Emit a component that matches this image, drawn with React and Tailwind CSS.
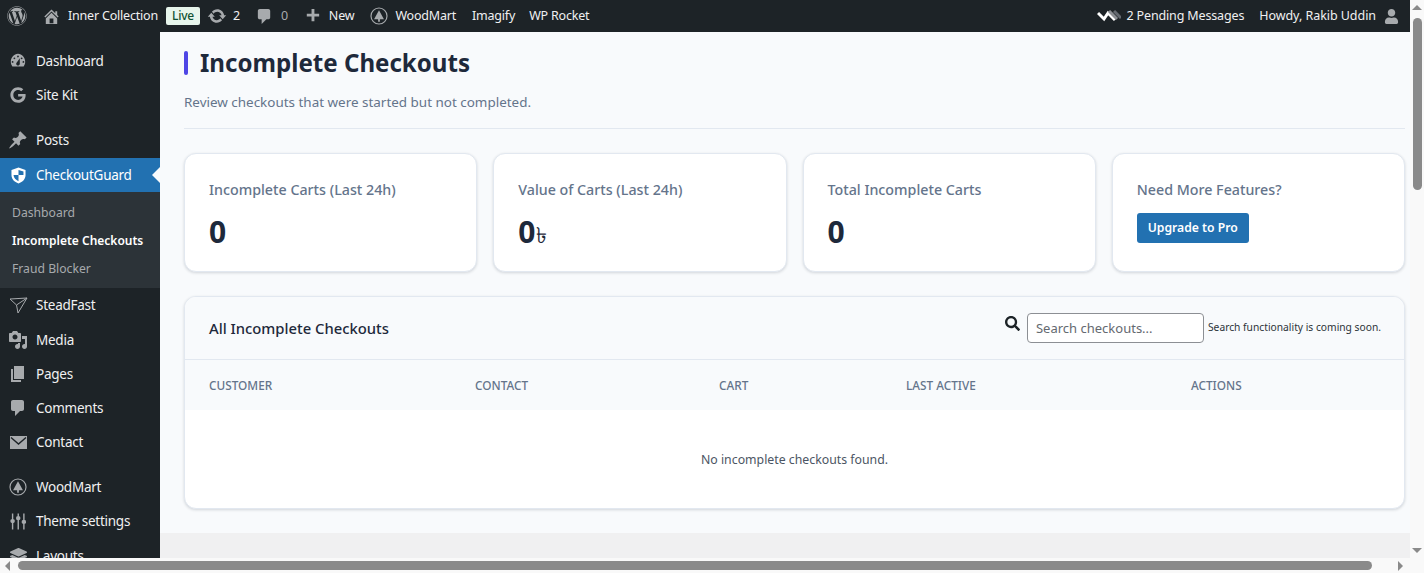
import { FaWordpress, FaGoogle, FaSearch, FaUser, FaLayerGroup } from "react-icons/fa";

const Dash = ({ d, size = 18, color = "#a7aaad" }) => (
  <svg width={size} height={size} viewBox="0 0 20 20" fill={color} fillRule="evenodd">
    <path d={d} />
  </svg>
);

const paths = {
  home: "M16 8.5l1.53 1.53-1.06 1.06L10 4.62l-6.47 6.47-1.06-1.06L10 2.5l4 4v-2h2v4zm-6-2.46l6 5.99V18H4v-5.97zM12 17v-5H8v5h4z",
  update: "M10.2 3.28c3.53 0 6.43 2.61 6.92 6h2.08l-3.5 4-3.5-4h2.32c-.45-1.97-2.21-3.44-4.32-3.44-1.45 0-2.73.71-3.54 1.8L4.95 5.66C6.23 4.2 8.11 3.28 10.2 3.28zm-.4 13.44c-3.52 0-6.43-2.61-6.92-6H.8l3.5-4c1.17 1.33 2.33 2.67 3.5 4H5.48c.45 1.97 2.21 3.44 4.32 3.44 1.45 0 2.73-.71 3.54-1.8l1.71 1.98c-1.28 1.46-3.16 2.38-5.25 2.38z",
  comment: "M5 2h9c1.1 0 2 .9 2 2v7c0 1.1-.9 2-2 2h-2l-5 5v-5H5c-1.1 0-2-.9-2-2V4c0-1.1.9-2 2-2z",
  plus: "M17 7v3h-5v5H9v-5H4V7h5V2h3v5h5z",
  page: "M6 15V2h10v13H6zm-1 1h8v2H3V5h2v11z",
  media: "M13 11V4c0-.55-.45-1-1-1h-1.67L9 1H5L3.67 3H2c-.55 0-1 .45-1 1v7c0 .55.45 1 1 1h10c.55 0 1-.45 1-1zM7 4.5c1.38 0 2.5 1.12 2.5 2.5S8.38 9.5 7 9.5 4.5 8.38 4.5 7 5.62 4.500 7 4.5zM14 6h5v10.5c0 1.38-1.12 2.5-2.5 2.5S14 17.88 14 16.5s1.12-2.5 2.5-2.5c.17 0 .34.02.5.05V9h-3V6zm-4 8.05V13h2v3.5c0 1.38-1.12 2.5-2.5 2.5S7 17.88 7 16.5 8.12 14 9.500 14c.17 0 .34.02.5.05z",
  pin: "M10.44 3.02l1.82-1.82 6.36 6.35-1.83 1.82c-1.05-.68-2.48-.57-3.41.36l-.75.75c-.92.93-1.04 2.35-.35 3.41l-1.83 1.82-2.41-2.41-2.8 2.79c-.42.42-3.38 2.71-3.8 2.29s1.86-3.39 2.28-3.81l2.79-2.79L4.1 9.36l1.83-1.82c1.05.69 2.48.57 3.4-.36l.75-.75c.93-.92 1.05-2.35.36-3.41z",
  gauge: "M3.76 16h12.48c1.1-1.43 1.76-3.21 1.76-5.14 0-4.47-3.58-8.86-8-8.86s-8 4.39-8 8.86c0 1.93.66 3.71 1.76 5.14zM10 4c.55 0 1 .45 1 1s-.45 1-1 1-1-.45-1-1 .45-1 1-1zM6 6c.55 0 1 .45 1 1s-.45 1-1 1-1-.45-1-1 .45-1 1-1zm8 0c.55 0 1 .45 1 1s-.45 1-1 1-1-.45-1-1 .45-1 1-1zm-5.37 5.55L12 7v6c0 1.1-.9 2-2 2s-2-.9-2-2c0-.57.24-1.08.63-1.45zM4 10c.55 0 1 .45 1 1s-.45 1-1 1-1-.45-1-1 .45-1 1-1zm12 0c.55 0 1 .45 1 1s-.45 1-1 1-1-.45-1-1 .45-1 1-1z",
};

const TreeIcon = ({ size = 18 }) => (
  <svg width={size} height={size} viewBox="0 0 20 20" fill="none">
    <circle cx="10" cy="10" r="8.9" stroke="#a7aaad" strokeWidth="1.3" />
    <path d="M10 3.500 15.500 13.500H11V16.500H9V13.500H4.500Z" fill="#a7aaad" />
  </svg>
);

const ShieldIcon = () => (
  <svg width="15" height="17" viewBox="0 0 16 18">
    <path d="M8 .5 15.500 3v5.500c0 4.200-3 7.600-7.500 9C3.500 16.100.5 12.700.5 8.500V3Z" fill="#fff" />
    <path d="M8 3 13.300 4.800V8.500H8ZM8 8.500V15C5 13.800 2.900 11.500 2.700 8.500Z" fill="#2271b1" />
  </svg>
);

const PlaneIcon = () => (
  <svg width="19" height="17" viewBox="0 0 19 17" fill="none" stroke="#a7aaad" strokeWidth="1">
    <path d="M1 2 18 1 9 16 7.500 8ZM18 1 7.500 8" />
  </svg>
);

const MailIcon = () => (
  <svg width="17" height="13" viewBox="0 0 17 13">
    <rect width="17" height="13" fill="#a7aaad" />
    <path d="M1 1.500 8.500 8 16 1.500" fill="none" stroke="#1d2327" strokeWidth="1.400" />
  </svg>
);

const SlidersIcon = () => (
  <svg width="16" height="17" viewBox="0 0 17 17" fill="#a7aaad">
    <rect x="2" y="0" width="1.500" height="17" />
    <rect x="8" y="0" width="1.500" height="17" />
    <rect x="14" y="0" width="1.500" height="17" />
    <rect x="0.500" y="6" width="4.500" height="4" rx="1.500" />
    <rect x="6.500" y="3" width="4.500" height="4" rx="1.500" />
    <rect x="12.500" y="7" width="4.500" height="4" rx="1.500" />
  </svg>
);

const PendingIcon = () => (
  <svg width="24" height="12" viewBox="0 0 24 12" fill="none" strokeWidth="3">
    <path d="M1 3 7 9 11 3 18 10" stroke="#fff" />
    <path d="M12 1 20 9" stroke="#8c8f94" />
    <path d="M17 1 24 8" stroke="#646970" />
  </svg>
);

const menuTop = [
  { label: "Dashboard", icon: <Dash d={paths.gauge} /> },
  { label: "Site Kit", icon: <FaGoogle size={16} color="#a7aaad" /> },
];

const menuBottom = [
  { label: "Media", icon: <Dash d={paths.media} size={20} /> },
  { label: "Pages", icon: <Dash d={paths.page} size={20} /> },
  { label: "Comments", icon: <Dash d={paths.comment} size={20} /> },
  { label: "Contact", icon: <MailIcon /> },
];

const stats = [
  { label: "Incomplete Carts (Last 24h)", value: "0" },
  { label: "Value of Carts (Last 24h)", value: "0", currency: true },
  { label: "Total Incomplete Carts", value: "0" },
];

const MenuRow = ({ icon, label, className = "" }) => (
  <div className={`flex h-[34px] items-center text-[13.5px] tracking-[-0.25px] text-[#f0f0f1] ${className}`}>
    <span className="flex w-[36px] shrink-0 justify-center">{icon}</span>
    <span className="pt-[1px]">{label}</span>
  </div>
);

const AdminBar = () => (
  <div className="flex h-[32px] shrink-0 items-center bg-[#1d2327] text-[12.5px] tracking-[-0.2px] text-[#f0f0f1]">
    <FaWordpress size={20} color="#a7aaad" className="ml-[7px]" />
    <span className="ml-[15px]"><Dash d={paths.home} size={19} /></span>
    <span className="ml-[7px]">Inner Collection</span>
    <span className="ml-[8px] flex h-[18px] w-[34px] items-center justify-center rounded-[2px] bg-[#e7f5ec] text-[12px] font-medium text-[#0f5132]">Live</span>
    <span className="ml-[7px]"><Dash d={paths.update} size={20} /></span>
    <span className="ml-[6px]">2</span>
    <span className="ml-[15px]"><Dash d={paths.comment} size={19} /></span>
    <span className="ml-[7px] text-[#a7aaad]">0</span>
    <span className="ml-[15px]"><Dash d={paths.plus} size={19} /></span>
    <span className="ml-[7px]">New</span>
    <span className="ml-[16px]"><TreeIcon /></span>
    <span className="ml-[7px]">WoodMart</span>
    <span className="ml-[16px]">Imagify</span>
    <span className="ml-[14px]">WP Rocket</span>
    <span className="ml-auto"><PendingIcon /></span>
    <span className="ml-[6px] tracking-[-0.15px]">2 Pending Messages</span>
    <span className="ml-[15px] tracking-[-0.05px]">Howdy, Rakib Uddin</span>
    <FaUser size={15} color="#a7aaad" className="ml-[8px] mr-[11px]" />
  </div>
);

const Sidebar = () => (
  <div className="h-full w-[160px] shrink-0 overflow-hidden bg-[#1d2327] pt-[12px]">
    {menuTop.map((item) => (
      <MenuRow key={item.label} icon={item.icon} label={item.label} />
    ))}
    <MenuRow className="mt-[11px]" icon={<Dash d={paths.pin} size={20} />} label="Posts" />
    <div className="relative mt-px flex h-[34px] items-center bg-[#2271b1] text-[13.5px] tracking-[-0.25px] text-white">
      <span className="flex w-[36px] justify-center"><ShieldIcon /></span>
      <span className="pt-[1px]">CheckoutGuard</span>
      <span className="absolute right-0 top-[9px] h-0 w-0 border-y-[8px] border-r-[8px] border-y-transparent border-r-[#f8fafc]" />
    </div>
    <div className="flex h-[96px] flex-col justify-center bg-[#2c3338] pl-[12px] pt-[1px] text-[12.2px] leading-[28px] text-[#a7aaad]">
      <div>Dashboard</div>
      <div className="text-[12px] font-semibold text-white">Incomplete Checkouts</div>
      <div>Fraud Blocker</div>
    </div>
    <MenuRow icon={<PlaneIcon />} label="SteadFast" />
    <div className="mt-px">
      {menuBottom.map((item) => (
        <MenuRow key={item.label} icon={item.icon} label={item.label} />
      ))}
    </div>
    <MenuRow className="mt-[11px]" icon={<TreeIcon />} label="WoodMart" />
    <MenuRow icon={<SlidersIcon />} label="Theme settings" />
    <MenuRow className="mt-px" icon={<FaLayerGroup size={17} color="#a7aaad" />} label="Layouts" />
  </div>
);

const StatCard = ({ label, value, currency }) => (
  <div className="h-[119px] rounded-xl border border-[#e2e8f0] bg-white px-[24px] pt-[24px] shadow-[0_1px_3px_rgba(15,23,42,0.16)]">
    <div className="text-[14.25px] font-medium leading-[24px] text-[#64748b]">{label}</div>
    <div className="mt-[9px] flex items-baseline text-[30px] font-bold leading-[42px] text-[#1e293b]">
      {value}
      {currency && <span className="ml-px text-[22px] font-normal">৳</span>}
    </div>
  </div>
);

const Main = () => (
  <div className="flex min-w-0 flex-1 flex-col">
    <div className="flex-1 bg-[#f8fafc] pl-[24px] pr-[5px]">
      <div className="flex items-center pt-[14px]">
        <span className="h-[24px] w-[4px] rounded-sm bg-[#4f46e5]" />
        <h1 className="ml-[12px] text-[24.1px] font-bold leading-[34px] text-[#1e293b]">Incomplete Checkouts</h1>
      </div>
      <p className="mt-[10px] text-[13.45px] leading-[24px] text-[#64748b]">Review checkouts that were started but not completed.</p>
      <div className="mt-[14px] border-b border-[#e2e8f0]" />

      <div className="mt-[24px] grid grid-cols-4 gap-[16px]">
        {stats.map((s) => (
          <StatCard key={s.label} {...s} />
        ))}
        <div className="h-[119px] rounded-xl border border-[#e2e8f0] bg-white px-[24px] pt-[24px] shadow-[0_1px_3px_rgba(15,23,42,0.16)]">
          <div className="text-[14.25px] font-medium leading-[24px] text-[#64748b]">Need More Features?</div>
          <button className="mt-[11px] flex h-[30px] w-[112px] items-center justify-center rounded-[3px] bg-[#2271b1] pt-[1px] text-[12.2px] font-semibold text-white">Upgrade to Pro</button>
        </div>
      </div>

      <div className="mt-[24px] h-[213px] overflow-hidden rounded-xl border border-[#e2e8f0] bg-white shadow-[0_1px_3px_rgba(15,23,42,0.16)]">
        <div className="flex h-[63px] items-center border-b border-[#e2e8f0] bg-[#f8fafc] pl-[24px] pr-[23px]">
          <h2 className="text-[14.8px] font-medium text-[#1e293b]">All Incomplete Checkouts</h2>
          <FaSearch size={15} color="#1d2327" className="mb-[10px] ml-auto" />
          <input
            readOnly
            placeholder="Search checkouts..."
            className="ml-[7px] h-[30px] w-[177px] rounded-[4px] border border-[#8c8f94] bg-white px-[8px] text-[13px] placeholder:text-[#646970]"
          />
          <span className="ml-[4px] text-[10.25px] text-[#2c3338]">Search functionality is coming soon.</span>
        </div>
        <div className="grid h-[50px] grid-cols-[266px_244px_187px_285px_1fr] items-center bg-[#f8fafc] pl-[24px] pt-[1px] text-[11.8px] font-medium uppercase text-[#64748b]">
          <div>Customer</div>
          <div>Contact</div>
          <div>Cart</div>
          <div>Last Active</div>
          <div>Actions</div>
        </div>
        <div className="flex h-[98px] items-center justify-center pt-[3px] text-[12.3px] text-[#4b5563]">No incomplete checkouts found.</div>
      </div>
    </div>
    <div className="h-[25px] shrink-0 bg-[#f0f0f1]" />
  </div>
);

const VerticalScrollbar = () => (
  <div className="flex w-[14px] shrink-0 flex-col items-center bg-[#f9f9f9] pt-[5px]">
    <span className="h-0 w-0 border-x-[5px] border-b-[5px] border-x-transparent border-b-[#8a8a8a]" />
    <span className="mt-[8px] h-[172px] w-[9px] rounded-full bg-[#8a8a8a]" />
    <span className="mb-[5px] mt-auto h-0 w-0 border-x-[5px] border-t-[5px] border-x-transparent border-t-[#8a8a8a]" />
  </div>
);

const HorizontalScrollbar = () => (
  <div className="flex h-[15px] shrink-0 items-center bg-[#f9f9f9] pl-[5px]">
    <span className="h-0 w-0 border-y-[5px] border-r-[5px] border-y-transparent border-r-[#8a8a8a]" />
    <span className="ml-[8px] h-[9px] w-[1354px] rounded-full bg-[#8a8a8a]" />
    <span className="ml-[26px] h-0 w-0 border-y-[5px] border-l-[5px] border-y-transparent border-l-[#8a8a8a]" />
  </div>
);

const App = () => (
  <div className="flex h-[573px] w-[1424px] flex-col overflow-hidden font-['Noto_Sans',sans-serif]">
    <div className="flex min-h-0 flex-1">
      <div className="flex min-w-0 flex-1 flex-col">
        <AdminBar />
        <div className="flex min-h-0 flex-1">
          <Sidebar />
          <Main />
        </div>
      </div>
      <VerticalScrollbar />
    </div>
    <HorizontalScrollbar />
  </div>
);

export default App;
